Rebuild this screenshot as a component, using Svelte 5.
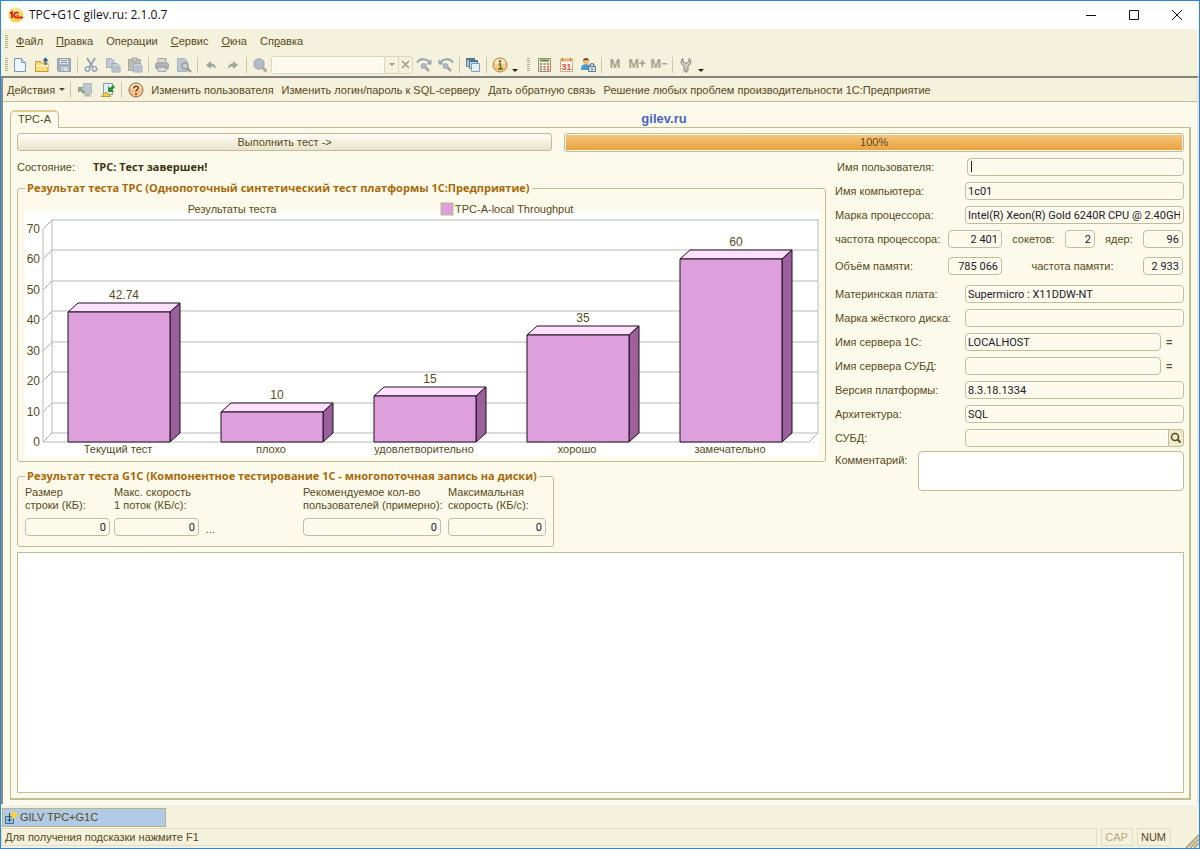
<script lang="ts">
	interface Bar {
		label: string;
		value: number;
	}

	const menus = [
		['', 'Ф', 'айл'],
		['', 'П', 'равка'],
		['Операции', '', ''],
		['', 'С', 'ервис'],
		['', 'О', 'кна'],
		['Сп', 'р', 'авка']
	];

	const tools = [
		['new', 'open', 'save'],
		['cut', 'copy', 'paste'],
		['print', 'preview'],
		['undo', 'redo']
	];

	const titles: Record<string, string> = {
		new: 'Новый',
		open: 'Открыть',
		save: 'Сохранить',
		cut: 'Вырезать',
		copy: 'Копировать',
		paste: 'Вставить',
		print: 'Печать',
		preview: 'Просмотр',
		undo: 'Отменить',
		redo: 'Вернуть',
		find: 'Найти',
		next: 'Найти следующий',
		prev: 'Найти предыдущий',
		windows: 'Окна',
		info: 'Справка',
		calc: 'Калькулятор',
		calendar: 'Календарь',
		user: 'Пользователь',
		wrench: 'Сервис'
	};

	const actions = [
		'Изменить пользователя',
		'Изменить логин/пароль к SQL-серверу',
		'Дать обратную связь',
		'Решение любых проблем производительности 1С:Предприятие'
	];

	const bars: Bar[] = [
		{ label: 'Текущий тест', value: 42.74 },
		{ label: 'плохо', value: 10 },
		{ label: 'удовлетворительно', value: 15 },
		{ label: 'хорошо', value: 35 },
		{ label: 'замечательно', value: 60 }
	];
	const ticks = [0, 10, 20, 30, 40, 50, 60, 70];

	// chart geometry: y of a value on the front plane
	const y = (v: number) => Math.round(239 - v * 3.05);
	const barX = (i: number) => 43 + i * 153;

	let comp = $state('1c01');
	let cpu = $state('Intel(R) Xeon(R) Gold 6240R CPU @ 2.40GHz');
	let board = $state('Supermicro : X11DDW-NT');
	let server = $state('LOCALHOST');
	let platform = $state('8.3.18.1334');
	let arch = $state('SQL');
	let progress = $state(100);
</script>

{#snippet icon(name: string)}
	<svg width="16" height="16" viewBox="0 0 16 16" fill="none" aria-hidden="true">
		{#if name === 'new'}
			<path d="M2.500 1.500h7l4 4v9h-11z" fill="#eef6ff" stroke="#7899b8" />
			<path d="M9.500 1.500v4h4" fill="#c9def0" stroke="#7899b8" />
		{:else if name === 'open'}
			<path d="M1.500 4.500h5l1 1.500h6.500v8.500h-12.500z" fill="#fbdc7c" stroke="#c9983e" />
			<path d="M2 9h12" stroke="#fff0b8" stroke-width="2" />
			<path d="M11.500 8V2M9.500 4l2-2.500 2 2.500" stroke="#2e5f8a" stroke-width="1.500" />
		{:else if name === 'save'}
			<path d="M1.500 1.500h13v13h-12l-1-1z" fill="#a3b1bf" stroke="#93a2b0" />
			<path d="M4 2h8v5H4zM5 10h7v4H5z" fill="#d7dde0" />
			<path d="M5 3.500h6M5 5.500h6M7 11v3" stroke="#96a5b3" />
		{:else if name === 'cut'}
			<path d="M4 1l5.500 9M12 1L6.500 10" stroke="#93a5b8" stroke-width="2" />
			<circle cx="4.500" cy="12" r="2.200" stroke="#93a5b8" stroke-width="1.500" />
			<circle cx="11.500" cy="12" r="2.200" stroke="#93a5b8" stroke-width="1.500" />
		{:else if name === 'copy'}
			<path d="M1.500 1.500h5l3 3v6h-8z" fill="#c0cad5" stroke="#a6b2c0" />
			<path d="M7 6.500h5l3 3v5.500H7z" fill="#c0cad5" stroke="#9dabba" />
			<path d="M8.500 10.500h5M8.500 12.500h5" stroke="#a6b2c0" />
		{:else if name === 'paste'}
			<path d="M1.500 2.500h12v11h-12z" fill="#bdbdb4" stroke="#aaa99e" />
			<path d="M5 1h5v3H5z" fill="#d8d8cf" stroke="#a0a096" />
			<path d="M6.500 6.500h6l2.500 2.500v6H6.500z" fill="#c0cad5" stroke="#9dabba" />
			<path d="M8 10.500h5M8 12.500h5" stroke="#a6b2c0" />
		{:else if name === 'print'}
			<path d="M4 1.500h8V6H4z" fill="#d6d6d0" stroke="#a3a3a0" />
			<rect x="1" y="5.500" width="14" height="7" rx="2" fill="#a5a7a8" />
			<path d="M4 10.500h8v4H4z" fill="#d6dadf" stroke="#a3abb5" />
			<path d="M2 8h12" stroke="#c3c3bf" />
		{:else if name === 'preview'}
			<path d="M1.500 1.500h7l3 3v10h-10z" fill="#bdc8d2" stroke="#a6b4c2" />
			<path d="M11 11l4 4" stroke="#a58c84" stroke-width="2" />
			<circle cx="9" cy="9" r="3" fill="#ccd2d4" stroke="#9b9da3" stroke-width="1.500" />
		{:else if name === 'undo'}
			<path d="M3 8l5-4v2.500c3 0 5 2 5 5.500-1-2-3-2.500-5-2.500V12z" fill="#98a799" />
		{:else if name === 'redo'}
			<path d="M13 8L8 4v2.500c-3 0-5 2-5 5.500 1-2 3-2.500 5-2.500V12z" fill="#98a799" />
		{:else if name === 'find'}
			<path d="M10.500 10.500l4 4" stroke="#b3a19b" stroke-width="3" />
			<circle cx="7" cy="7" r="5" fill="#b0bbcc" stroke="#aaaeb8" stroke-width="1.500" />
		{:else if name === 'next' || name === 'prev'}
			<g transform={name === 'prev' ? 'matrix(-1 0 0 1 16 0)' : undefined}>
				<path d="M1 5.500c2.500-4 8.500-4.500 12-1" stroke="#93a6b2" stroke-width="2" />
				<path d="M15.500 2v5.500H10z" fill="#93a6b2" />
			</g>
			<path d="M9 10l4 4" stroke="#b3a09a" stroke-width="2.500" />
			<circle cx="7.500" cy="9" r="2.500" fill="#b0bbcc" stroke="#a8a9b6" />
		{:else if name === 'windows'}
			<path d="M1.500 1.500h8v8h-8z" fill="#a9c6d8" stroke="#5f8199" />
			<path d="M4.500 3.500h8v8h-8z" fill="#bed6e5" stroke="#5f8199" />
			<path d="M6.500 6.500h8v8h-8z" fill="#e3f0fa" stroke="#7f9fb5" />
			<path d="M1 2h9M4 4h9" stroke="#53768f" stroke-width="2" />
		{:else if name === 'info'}
			<circle cx="8" cy="8" r="7" fill="#f8cb80" stroke="#b5854f" />
			<ellipse cx="8" cy="5" rx="5" ry="3" fill="#fdebc4" />
			<path d="M6.500 7H8.500v5M6 12h5" stroke="#4f6d2c" stroke-width="1.500" />
			<circle cx="8" cy="4.300" r="1.200" fill="#4f6d2c" />
		{:else if name === 'calc'}
			<path d="M2.500 1.500h12v13h-12z" fill="#f7eddd" stroke="#a3896c" />
			<path d="M4 3.500h9" stroke="#49943f" stroke-width="2" />
			<path d="M4 7h2M7.500 7h2M4 10h2M7.500 10h2M4 12.500h2M7.500 12.500h2" stroke="#86725e" stroke-width="1.500" />
			<path d="M11 7h2M11 10h2M11 12.500h2" stroke="#d5502e" stroke-width="1.500" />
		{:else if name === 'calendar'}
			<path d="M2.500 2.500h12v12h-12z" fill="#fffaf4" stroke="#c9a987" />
			<path d="M2 3h13" stroke="#eeb26c" stroke-width="3" />
			<path d="M4.500 1v3M12.500 1v3" stroke="#9d7651" />
			<text x="8.500" y="13" text-anchor="middle" font-size="9" font-weight="700" fill="#e2502e">31</text>
		{:else if name === 'user'}
			<path d="M1 12c0-4 3-5 5-5s4 1 5 4v2H1z" fill="#4b9bd1" />
			<circle cx="6" cy="4.500" r="3" fill="#f3bd73" />
			<path d="M3 4c0-4 6-4 6-.5L6 3z" fill="#76502e" />
			<path d="M10 10V8.500c0-2.500 4-2.500 4 0V10" stroke="#6e8298" stroke-width="1.500" />
			<path d="M8.500 9.500h7v5h-7z" fill="#c7dceb" stroke="#5f7c94" />
			<path d="M12 11v2" stroke="#4a6073" />
		{:else if name === 'wrench'}
			<path d="M5 1.500v3l3 2 3-2v-3c2 1 2.500 4 1 6L10 9v4.500c0 2-4 2-4 0V9L4 7.500c-1.500-2-1-5 1-6z" fill="#cfcfc9" stroke="#85857d" />
			<circle cx="8" cy="13" r=".8" fill="#77776f" />
		{:else if name === 'reread'}
			<path d="M6.500 1.500h8v10h-8z" fill="#bdc7ce" stroke="#b0b9bf" />
			<path d="M1 5v6l2-2 3.500 3 2-2L5 7l2-2z" fill="#8ea093" />
			<path d="M6 14.500l4.500-4 4.500 4z" fill="#bbb8aa" />
		{:else if name === 'reload'}
			<path d="M3.500 1.500h9v11h-9z" fill="#e2effa" stroke="#829db3" />
			<path d="M8 4v6h6l-2-2 3-3-2-2-3 3z" fill="#2f8d2c" />
			<path d="M1 14.500l5-4.500 5 4.500z" fill="#f5cf4a" stroke="#c09a2d" />
		{:else if name === 'help'}
			<circle cx="8" cy="8" r="7" fill="#f7c085" stroke="#8d6b4c" />
			<ellipse cx="8" cy="5" rx="5" ry="3" fill="#fde4c4" />
			<path d="M5.800 6.500c0-3 4.500-3 4.500-.5C10.300 7.500 8 7.800 8 9.500" stroke="#704020" stroke-width="1.500" />
			<circle cx="8" cy="12" r="1" fill="#704020" />
		{/if}
	</svg>
{/snippet}

{#snippet tool(name: string)}
	<button class="tool" aria-label={titles[name]}>{@render icon(name)}</button>
{/snippet}

<div class="window">
	<header class="titlebar">
		<svg width="16" height="16" viewBox="0 0 16 16" aria-hidden="true">
			<circle cx="8" cy="8" r="7.500" fill="#fbd04c" />
			<ellipse cx="8" cy="4.500" rx="5.500" ry="3.500" fill="#fde893" />
			<path d="M2 6.500l2-1.500V11" fill="none" stroke="#d8221c" stroke-width="1.800" />
			<path d="M10.500 6.500C9 4.500 6 5.500 6 8s2 2.500 3.500 2.500H15" fill="none" stroke="#d8221c" stroke-width="1.800" />
			<path d="M10.500 8.300H8.500" stroke="#d8221c" />
		</svg>
		<h1>TPC+G1C gilev.ru: 2.1.0.7</h1>
		<div class="controls">
			<button aria-label="Свернуть"><svg width="12" height="12" viewBox="0 0 12 12"><path d="M1 6.500h10" /></svg></button>
			<button aria-label="Развернуть"><svg width="12" height="12" viewBox="0 0 12 12"><path d="M1.500 1.500h9v9h-9z" /></svg></button>
			<button aria-label="Закрыть"><svg width="12" height="12" viewBox="0 0 12 12"><path d="M1 1l10 10M11 1L1 11" /></svg></button>
		</div>
	</header>

	<nav class="menubar">
		<i class="grip"></i>
		{#each menus as [before, key, after]}
			<button>{before}{#if key}<u>{key}</u>{/if}{after}</button>
		{/each}
	</nav>

	<div class="toolbar">
		<i class="grip"></i>
		{#each tools as group}
			{#each group as name}
				{@render tool(name)}
			{/each}
			<i class="sep"></i>
		{/each}
		{@render tool('find')}
		<div class="search">
			<input aria-label="Поиск" />
			<button aria-label="Список"><i class="caret"></i></button>
			<button aria-label="Очистить">
				<svg width="9" height="9" viewBox="0 0 9 9"><path d="M1 1l7 7M8 1L1 8" stroke="#a19c86" stroke-width="1.500" /></svg>
			</button>
		</div>
		{@render tool('next')}
		{@render tool('prev')}
		<i class="sep"></i>
		{@render tool('windows')}
		<i class="sep"></i>
		{@render tool('info')}
		<button class="more" aria-label="Ещё"><i class="caret"></i></button>
		<i class="grip second"></i>
		{@render tool('calc')}
		{@render tool('calendar')}
		{@render tool('user')}
		<i class="sep"></i>
		<button class="tool mem">M</button>
		<button class="tool mem">M+</button>
		<button class="tool mem">M−</button>
		<i class="sep"></i>
		{@render tool('wrench')}
		<button class="more" aria-label="Ещё"><i class="caret"></i></button>
	</div>

	<main class="form">
		<div class="actions">
			<button>Действия <i class="caret"></i></button>
			<i class="sep"></i>
			<button class="tool" aria-label="Прочитать">{@render icon('reread')}</button>
			<button class="tool" aria-label="Обновить">{@render icon('reload')}</button>
			<i class="sep"></i>
			<button class="tool" aria-label="Помощь">{@render icon('help')}</button>
			{#each actions as action}
				<button class="action">{action}</button>
			{/each}
		</div>

		<div class="page">
			<div class="tabs">
				<button class="tab">TPC-A</button>
				<a href="#gilev">gilev.ru</a>
			</div>
			<div class="panel">
				<div class="run">
					<button class="start">Выполнить тест -&gt;</button>
					<div class="progress" role="progressbar" aria-label="Выполнение" aria-valuenow={progress}>
						<div class="fill" style="width: {progress}%">{progress}%</div>
					</div>
				</div>

				<div class="columns">
					<section class="results">
						<p class="state">Состояние: <strong>TPC: Тест завершен!</strong></p>

						<fieldset class="tpc">
							<legend>Результат теста TPC (Однопоточный синтетический тест платформы 1С:Предприятие)</legend>
							<svg class="chart" viewBox="0 0 794 253" role="img" aria-label="Результаты теста">
								<rect y="8" width="794" height="245" fill="#fff" />
								<text x="207" y="10" text-anchor="middle">Результаты теста</text>
								<rect x="416" y="0" width="12" height="12" fill="#dda0dd" stroke="#beb68c" />
								<text x="430" y="10">TPC-A-local Throughput</text>
								<g class="grid">
									{#each ticks as t}
										<path d="M18 {y(t)}l9 -9H793" />
									{/each}
									<path d="M18 {y(70)}V239H784l9 -9V16M27 16V230" />
								</g>
								{#each ticks as t}
									<text class="tick" x="15" y={y(t) + 4} text-anchor="end">{t}</text>
								{/each}
								{#each bars as bar, i}
									<g class="bar">
										<path d="M{barX(i)} {y(bar.value)}l10 -9h102l-10 9z" fill="#ffe0ff" />
										<path d="M{barX(i) + 102} {y(bar.value)}l10 -9V230l-10 9z" fill="#9b5f9b" />
										<path d="M{barX(i)} {y(bar.value)}h102V239h-102z" fill="#dda0dd" />
									</g>
									<text class="tick" x={barX(i) + 56} y={y(bar.value) - 13} text-anchor="middle">{bar.value}</text>
									<text x={barX(i) + 50} y="250" text-anchor="middle">{bar.label}</text>
								{/each}
							</svg>
						</fieldset>

						<fieldset class="g1c">
							<legend>Результат теста G1C (Компонентное тестирование 1С - многопоточная запись на диски)</legend>
							<label class="size">Размер<br />строки (КБ):<input value="0" /></label>
							<label class="size">Макс. скорость<br />1 поток (КБ/с):<input value="0" /></label>
							<span class="dots">...</span>
							<label class="users">Рекомендуемое кол-во<br />пользователей (примерно):<input value="0" /></label>
							<label class="speed">Максимальная<br />скорость (КБ/с):<input value="0" /></label>
						</fieldset>
					</section>

					<section class="details">
						<div class="row shifted"><label for="user">Имя пользователя:</label><input id="user" class="focused" /></div>
						<div class="row"><label for="comp">Имя компьютера:</label><input id="comp" bind:value={comp} /></div>
						<div class="row"><label for="cpu">Марка процессора:</label><input id="cpu" bind:value={cpu} /></div>
						<div class="row short">
							<label for="freq">частота процессора:</label><input id="freq" class="wide" value="2 401" />
							<label for="sockets">сокетов:</label><input id="sockets" class="tiny" value="2" />
							<label for="cores">ядер:</label><input id="cores" class="small" value="96" />
						</div>
						<div class="row short memory">
							<label for="mem">Объём памяти:</label><input id="mem" class="wide" value="785 066" />
							<label for="memfreq">частота памяти:</label><input id="memfreq" class="small" value="2 933" />
						</div>
						<div class="row"><label for="board">Материнская плата:</label><input id="board" bind:value={board} /></div>
						<div class="row"><label for="disk">Марка жёсткого диска:</label><input id="disk" /></div>
						<div class="row"><label for="server">Имя сервера 1С:</label><input id="server" bind:value={server} /><b>=</b></div>
						<div class="row"><label for="dbserver">Имя сервера СУБД:</label><input id="dbserver" /><b>=</b></div>
						<div class="row"><label for="platform">Версия платформы:</label><input id="platform" bind:value={platform} /></div>
						<div class="row"><label for="arch">Архитектура:</label><input id="arch" bind:value={arch} /></div>
						<div class="row lookup">
							<label for="dbms">СУБД:</label><input id="dbms" />
							<button aria-label="Открыть">
								<svg width="12" height="12" viewBox="0 0 12 12" fill="none" stroke="#5c4a1e">
									<circle cx="5" cy="5" r="3.500" stroke-width="1.500" />
									<path d="M7.500 7.500l3 3" stroke-width="2" />
								</svg>
							</button>
						</div>
						<div class="row comment"><label for="comment">Комментарий:</label><textarea id="comment"></textarea></div>
					</section>
				</div>

				<textarea class="log" aria-label="Протокол"></textarea>
			</div>
		</div>
	</main>

	<div class="taskbar">
		<button>
			<svg width="14" height="14" viewBox="0 0 14 14" aria-hidden="true">
				<path d="M1.500 5.500h8v7h-8z" fill="#9cc4de" stroke="#426a8a" />
				<path d="M5.500 2v8M3.500 8l2 2.500 2-2.500" fill="none" stroke="#294a66" />
				<path d="M10 0l4 4-4 4-4-4z" fill="#f9d338" />
			</svg>
			GILV TPC+G1C
		</button>
	</div>
	<footer class="status">
		<span class="hint">Для получения подсказки нажмите F1</span>
		<span class="off">CAP</span>
		<span>NUM</span>
		<svg width="14" height="14" viewBox="0 0 14 14" aria-hidden="true">
			<path d="M1 14L14 1M5 14l9-9M9 14l5-5" stroke="#b3a97c" stroke-width="2" />
		</svg>
	</footer>
</div>

<style>
	:global(body) {
		margin: 0;
	}

	.window {
		--line: #c3bb95;
		--bar: #f4f1dd;
		--page: #fcfaeb;
		display: flex;
		flex-direction: column;
		min-height: 100vh;
		box-sizing: border-box;
		border: 1px solid #2b88d8;
		background: var(--bar);
		color: #594a20;
		font: 11px/13px 'Liberation Sans', Arial, sans-serif;
	}

	button,
	input,
	textarea {
		box-sizing: border-box;
		margin: 0;
		padding: 0;
		border: 0;
		background: none;
		color: inherit;
		font: inherit;
		white-space: nowrap;
	}

	svg {
		flex: none;
		display: block;
	}

	.titlebar {
		display: flex;
		align-items: center;
		gap: 5px;
		height: 28px;
		padding: 0 1px 0 7px;
		background: #fff;
	}

	h1 {
		flex: 1;
		margin: 0;
		color: #111;
		font: 12px/16px 'Open Sans', sans-serif;
	}

	.controls {
		display: flex;
	}

	.controls button {
		display: flex;
		align-items: center;
		justify-content: center;
		width: 43px;
		height: 28px;
	}

	.controls svg {
		fill: none;
		stroke: #111;
	}

	.menubar {
		display: flex;
		align-items: center;
		gap: 13px;
		height: 24px;
	}

	.toolbar {
		display: flex;
		align-items: center;
		height: 23px;
	}

	.grip {
		width: 3px;
		height: 13px;
		margin: 0 0 0 4px;
		background: repeating-linear-gradient(#b6ae88 0 1px, transparent 1px 2px);
	}

	.menubar .grip {
		margin-right: -5px;
	}

	.toolbar .grip {
		margin-right: 1px;
	}

	.toolbar .second {
		margin: 0 3px 0 8px;
	}

	.tool {
		display: flex;
		align-items: center;
		justify-content: center;
		width: 22px;
		height: 20px;
	}

	.mem {
		color: #a7a28f;
		font: 700 12px/13px Roboto, sans-serif;
	}

	.sep {
		width: 1px;
		height: 16px;
		margin: 0 2px;
		background: #cdc7a6;
	}

	.caret {
		display: inline-block;
		border: 3px solid transparent;
		border-top-color: currentColor;
		border-bottom: 0;
	}

	.more {
		display: flex;
		align-items: flex-end;
		justify-content: center;
		width: 8px;
		height: 14px;
		color: #2c2208;
	}

	.search {
		display: flex;
		width: 142px;
		height: 18px;
		box-sizing: border-box;
		border: 1px solid #dbd6bd;
		border-radius: 3px;
		color: #a19c86;
	}

	.search input {
		flex: 1;
		min-width: 0;
		border: 1px solid #fff;
		background: #fcfaeb;
	}

	.search button {
		display: flex;
		align-items: center;
		justify-content: center;
		width: 14px;
		border-left: 1px solid #dbd6bd;
	}

	.form {
		flex: 1;
		display: flex;
		flex-direction: column;
		border-top: 2px solid #83827a;
		border-left: 2px solid #8b8a82;
		border-right: 2px solid #e6e4d6;
		background: var(--page);
	}

	.actions {
		display: flex;
		align-items: center;
		height: 22px;
		padding: 1px 0 0 4px;
		border-bottom: 1px solid var(--line);
		background: var(--bar);
	}

	.actions .caret {
		margin: 0 3px 3px 1px;
	}

	.actions .tool {
		width: 23px;
	}

	.action {
		margin: 0 4px;
	}

	.page {
		flex: 1;
		display: flex;
		flex-direction: column;
		padding: 7px 6px 4px 7px;
	}

	.tabs {
		display: flex;
		align-items: flex-end;
		height: 18px;
	}

	.tab {
		width: 49px;
		height: 18px;
		margin-bottom: -1px;
		padding-bottom: 2px;
		border: 1px solid var(--line);
		border-top: 2px solid #e6c98c;
		border-bottom: 0;
		border-radius: 5px 5px 0 0;
		background: var(--page);
		z-index: 1;
	}

	.tabs a {
		margin: 0 auto;
		padding: 0 0 1px 78px;
		color: #4c63c4;
		font: 700 13px/15px 'Liberation Sans', sans-serif;
		text-decoration: none;
	}

	.panel {
		flex: 1;
		display: flex;
		flex-direction: column;
		padding: 5px;
		border: 1px solid var(--line);
		border-right-width: 2px;
		border-bottom-width: 2px;
	}

	.run {
		display: flex;
		gap: 12px;
		padding-left: 1px;
	}

	.start {
		flex: 536;
		height: 18px;
		border: 1px solid var(--line);
		border-radius: 3px;
		background: linear-gradient(#fefdf6, #e9e4ca);
	}

	.progress {
		flex: 619;
		height: 19px;
		box-sizing: border-box;
		padding: 1px;
		border: 1px solid var(--line);
		border-radius: 3px;
	}

	.fill {
		height: 15px;
		background: linear-gradient(#f6c47a, #e9a23e);
		line-height: 15px;
		text-align: center;
	}

	.columns {
		display: flex;
		gap: 9px;
		padding: 3px 0 5px 1px;
	}

	.results {
		flex: 1;
		min-width: 0;
	}

	.state {
		display: flex;
		gap: 18px;
		margin: 0 0 2px;
		line-height: 24px;
	}

	.state strong {
		color: #40330f;
		font: 700 11px/24px 'Open Sans', sans-serif;
	}

	fieldset {
		min-width: 0;
		margin: 0;
		border: 1px solid var(--line);
		border-radius: 3px;
	}

	legend {
		padding: 0 2px;
		color: #a8690a;
		font: 700 11px/14px 'Open Sans', sans-serif;
		white-space: nowrap;
	}

	.tpc {
		padding: 8px 6px 5px 7px;
	}

	.chart {
		width: 100%;
		height: auto;
		fill: #594a20;
		overflow: visible;
	}

	.tick {
		font-size: 12px;
	}

	.grid path {
		fill: none;
		stroke: #b9b9b9;
	}

	.bar path {
		stroke: #1c101c;
		stroke-linejoin: round;
	}

	.g1c {
		display: flex;
		gap: 4px;
		width: 537px;
		max-width: 100%;
		box-sizing: border-box;
		margin-top: 7px;
		padding: 3px 7px 10px;
	}

	.g1c label {
		display: block;
		white-space: nowrap;
	}

	.g1c input {
		display: block;
		width: 100%;
		margin-top: 6px;
		text-align: right;
	}

	.size {
		width: 85px;
	}

	.dots {
		flex: 1;
		align-self: flex-end;
		padding-left: 3px;
	}

	.users {
		width: 138px;
	}

	.speed {
		width: 98px;
		margin-left: 3px;
	}

	.g1c input,
	.row input,
	.row textarea {
		height: 18px;
		padding: 1px 3px 0 2px;
		border: 1px solid var(--line);
		border-radius: 4px;
		background: var(--page);
		box-shadow: inset 0 0 0 1px #fff;
		color: #23202c;
		font-family: Roboto, sans-serif;
	}

	.details {
		width: 349px;
	}

	.row {
		display: flex;
		align-items: center;
		height: 24px;
	}

	.row label {
		width: 130px;
		white-space: nowrap;
	}

	.row input {
		flex: 1;
		min-width: 0;
	}

	.row b {
		width: 23px;
		padding-left: 5px;
		box-sizing: border-box;
	}

	.shifted {
		padding-left: 2px;
	}

	.row .focused {
		background: linear-gradient(#222, #222) 3px 2px / 1px 11px no-repeat var(--page);
	}

	.short label {
		width: auto;
	}

	.short label:first-child {
		width: 113px;
	}

	.row.short input {
		flex: none;
		text-align: right;
	}

	.short input + label {
		margin: 0 auto;
	}

	.short .wide {
		width: 54px;
	}

	.short .tiny {
		width: 30px;
	}

	.short .small {
		width: 40px;
		margin-right: 1px;
	}

	.memory {
		margin: 3px 0 4px;
	}

	.lookup input {
		border-radius: 4px 0 0 4px;
	}

	.lookup button {
		display: flex;
		align-items: center;
		justify-content: center;
		width: 15px;
		height: 18px;
		border: 1px solid var(--line);
		border-left: 0;
		border-radius: 0 4px 4px 0;
		background: #efebd2;
	}

	.row.comment {
		align-items: flex-start;
		height: auto;
		padding-top: 1px;
	}

	.comment label {
		width: 83px;
		padding-top: 3px;
	}

	.comment textarea {
		flex: 1;
		height: 40px;
		background: #fff;
		resize: none;
	}

	.log {
		flex: 1;
		min-height: 80px;
		margin: 0 0 0 1px;
		border: 1px solid var(--line);
		background: #fff;
		resize: none;
	}

	.taskbar {
		padding: 3px 0 1px 1px;
		border-top: 1px solid #fff;
	}

	.taskbar button {
		display: flex;
		align-items: center;
		gap: 2px;
		width: 164px;
		height: 19px;
		padding-left: 1px;
		border: 1px solid #b9b188;
		background: #b1cbe6;
	}

	.status {
		display: flex;
		gap: 4px;
		height: 20px;
	}

	.status span {
		box-sizing: border-box;
		height: 18px;
		padding: 0 4px 0 3px;
		border: 1px solid #e1dcc3;
		line-height: 17px;
	}

	.status .hint {
		flex: 1;
	}

	.status .off {
		color: #b8a878;
	}

	.status svg {
		align-self: flex-end;
		margin-left: 10px;
	}
</style>
